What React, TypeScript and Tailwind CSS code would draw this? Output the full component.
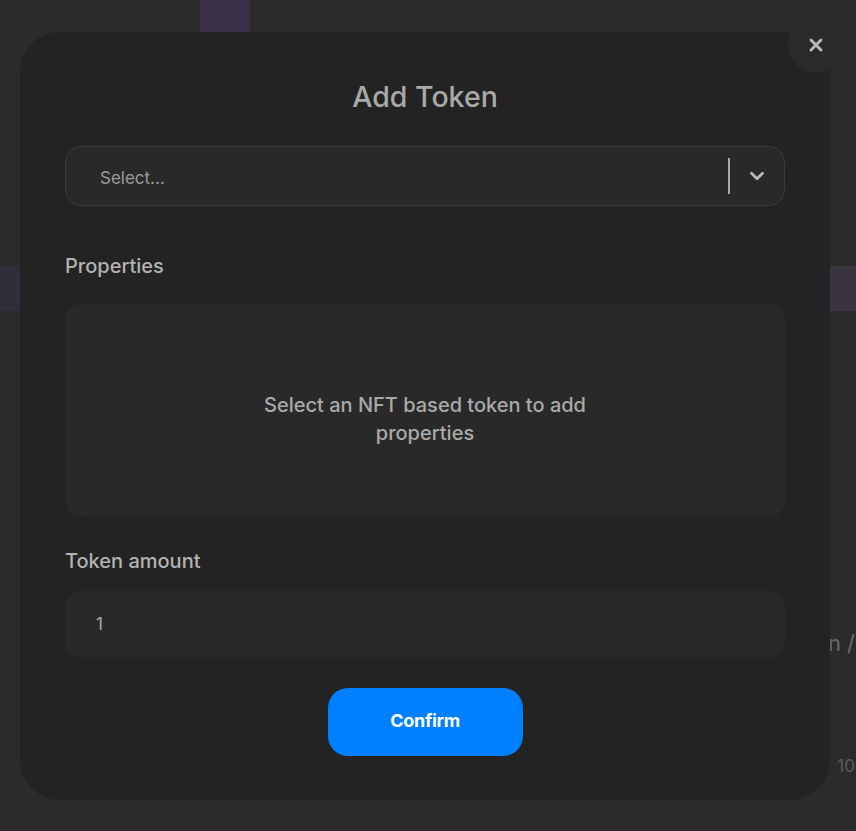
import { ChevronDown, X } from 'lucide-react';

function Backdrop() {
  return (
    <div className="absolute inset-0 overflow-hidden bg-[#2b2b2b]">
      <div className="ml-[200px] h-[32px] w-[50px] bg-[#3a3048]" />
      <div className="mt-[234px] flex h-[45px] justify-between">
        <div className="w-[20px] bg-[#2f2f3c]" />
        <div className="w-[26px] bg-[#3a3340]" />
      </div>
      <div className="mt-[127px] border-t border-[#262626]" />
      <div className="mt-[190px] flex justify-end pr-[1px] text-[22px] leading-[28px] text-[#6a6a6a]" style={{ fontFamily: 'Inter, sans-serif' }}>
        <span>Token /</span>
      </div>
      <div className="mt-[98px] flex justify-end pr-[1px] text-[17px] leading-[22px] text-[#5a5a5a]" style={{ fontFamily: 'Inter, sans-serif' }}>
        <span>10</span>
      </div>
    </div>
  );
}

export default function App() {
  return (
    <div className="relative h-[831px] w-full overflow-hidden" style={{ fontFamily: 'Inter, "Noto Sans", sans-serif' }}>
      <Backdrop />
      <div className="absolute inset-0 pt-[32px] pl-[20px] pr-[26px]">
        <div className="relative h-[768px] rounded-[40px] rounded-tr-none bg-[#232323] px-[45px] pt-[48px]">
          <button
            type="button"
            className="absolute -right-[14px] -top-[15px] flex h-[56px] w-[56px] items-center justify-center rounded-full bg-[#2a2a2a] text-[#b9b9b9]"
          >
            <X size={20} strokeWidth={3.5} />
          </button>

          <h2 className="text-center text-[28.5px] font-medium leading-[34px] text-[#a9a9a9]">Add Token</h2>

          <div className="mt-[32px] flex h-[60px] items-center rounded-[16px] border border-[#3a3a3a] bg-[#292929] pl-[34px] pr-[16px]">
            <span className="flex-1 pt-[5px] text-[17px] text-[#9b9b9b]">Select...</span>
            <div className="h-[36px] w-[2px] bg-[#a9a9a9]" />
            <ChevronDown className="ml-[16px] text-[#b9b9b9]" size={22} strokeWidth={3} />
          </div>

          <div className="mt-[48px] text-[20px] font-medium leading-[24px] text-[#b3b3b3]">Properties</div>

          <div className="mt-[26px] flex h-[213px] items-center justify-center rounded-[16px] bg-[#292929] pt-[16px]">
            <p className="w-[360px] text-center text-[20px] font-medium leading-[28px] text-[#a9a9a9]">
              Select an NFT based token to add properties
            </p>
          </div>

          <div className="mt-[32px] text-[20px] font-medium leading-[24px] text-[#b3b3b3]">Token amount</div>

          <div className="mt-[18px] flex h-[67px] items-center rounded-[16px] bg-[#292929] pl-[31px] text-[17px] text-[#a9a9a9]">
            1
          </div>

          <div className="mt-[30px] flex justify-center">
            <button
              type="button"
              className="h-[68px] w-[195px] rounded-[20px] bg-[#0080ff] pb-[3px] text-[18px] font-bold tracking-[-0.3px] text-white"
            >
              Confirm
            </button>
          </div>
        </div>
      </div>
    </div>
  );
}
